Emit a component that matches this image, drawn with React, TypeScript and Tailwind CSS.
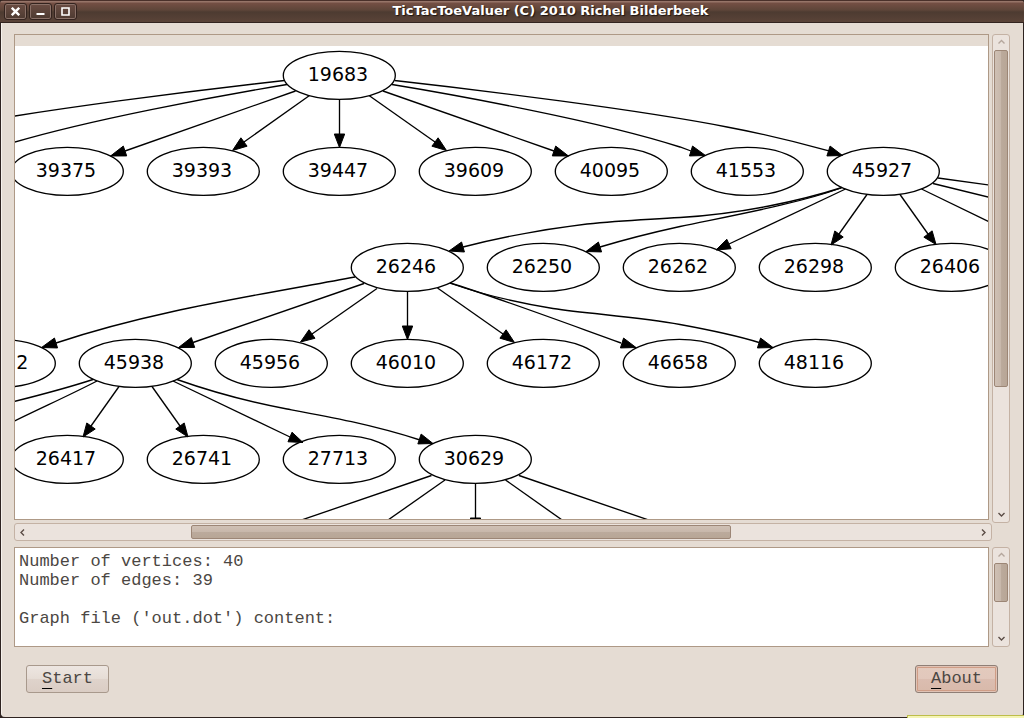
import React from 'react';
import { clsx } from 'clsx';

type Point = [number, number];
type Edge = { d: string; base?: Point; tip?: Point };

const nodes: { id: string; x: number; y: number }[] = [
  { id: '19683', x: 324, y: 29 },
  { id: '39375', x: 52, y: 125 },
  { id: '39393', x: 188, y: 125 },
  { id: '39447', x: 324, y: 125 },
  { id: '39609', x: 460, y: 125 },
  { id: '40095', x: 596, y: 125 },
  { id: '41553', x: 732, y: 125 },
  { id: '45927', x: 868, y: 125 },
  { id: '26246', x: 392, y: 221 },
  { id: '26250', x: 528, y: 221 },
  { id: '26262', x: 664, y: 221 },
  { id: '26298', x: 800, y: 221 },
  { id: '26406', x: 936, y: 221 },
  { id: '45932', x: -16, y: 317 },
  { id: '45938', x: 120, y: 317 },
  { id: '45956', x: 256, y: 317 },
  { id: '46010', x: 392, y: 317 },
  { id: '46172', x: 528, y: 317 },
  { id: '46658', x: 664, y: 317 },
  { id: '48116', x: 800, y: 317 },
  { id: '26417', x: 52, y: 413 },
  { id: '26741', x: 188, y: 413 },
  { id: '27713', x: 324, y: 413 },
  { id: '30629', x: 460, y: 413 },
];

const edges: Edge[] = [
  { d: 'M284.5 80.5C199 90 39 110-48 127' },
  { d: 'M287 84.5C229 94 79 121-1 147' },
  { d: 'M295.5 91L125 151', base: [125, 151], tip: [110.5, 156] },
  { d: 'M309.5 95.5L244 142', base: [244, 142], tip: [232.5, 150.5] },
  { d: 'M339.5 99.5V134', base: [339.5, 134], tip: [339.5, 147.5] },
  { d: 'M369 95.5L435 142', base: [435, 142], tip: [446.5, 150.5] },
  { d: 'M383 91L554 151', base: [554, 151], tip: [568.5, 156] },
  { d: 'M392 84.5C450 94 600 121 680 147L691 151', base: [691, 151], tip: [705.5, 155.5] },
  { d: 'M394.5 80.5C480 90 640 110 727 127C775 136 800 143 829 151', base: [828.5, 151], tip: [842.5, 155.5] },
  { d: 'M842 187.5C800 201 740 214 680 217.5C640 220 620 220.5 587 224C545 229 510 235 463 247', base: [463, 247], tip: [449, 251] },
  { d: 'M841 188C800 203 740 214 680 226.5C655 232 630 238 600 247', base: [600, 247], tip: [586, 251.5] },
  { d: 'M845.5 189L729 244', base: [729, 244], tip: [716, 250] },
  { d: 'M867 194.5L839 234', base: [839, 234], tip: [831, 245] },
  { d: 'M900 194.5L928 234', base: [928, 234], tip: [936, 244.5] },
  { d: 'M938 178L1004 187' },
  { d: 'M933 183.5L1004 201' },
  { d: 'M921.5 189L1004 229' },
  { d: 'M355 277C290 289 230 299 173 311.5C125 322 95 330 56 343', base: [56, 343], tip: [41.5, 347.5] },
  { d: 'M364 283.5L193 342.5', base: [193, 342.5], tip: [178.5, 347.5] },
  { d: 'M377 288.5L312 334', base: [312, 334], tip: [300.5, 342] },
  { d: 'M407.5 291.5V326', base: [407.5, 326], tip: [407.5, 339.5] },
  { d: 'M437.5 288L503 334', base: [503, 334], tip: [514.5, 342.5] },
  { d: 'M450 283C490 295 560 321 621 343', base: [622, 343], tip: [636, 347.5] },
  { d: 'M450 283C480 294 520 303 553 308.5C590 314 640 317 680 324.5C710 330 735 335 759 342.5', base: [759, 343], tip: [773, 347.5] },
  { d: 'M93 379.5C70 387 45 394 0 405' },
  { d: 'M97 381C70 395 45 406 0 428' },
  { d: 'M119 386.5L91 426', base: [91, 426], tip: [83, 437] },
  { d: 'M152 386.5L180 426', base: [180, 426], tip: [188, 437] },
  { d: 'M173 381L290 437', base: [290, 437], tip: [303, 442.5] },
  { d: 'M177 379.5C215 393 250 402 287 409C325 416 370 424 420 440', base: [419.5, 439], tip: [433, 443.5] },
  { d: 'M431.5 475.5L246 539' },
  { d: 'M445 480L361 539' },
  { d: 'M475.5 483.5V518', base: [475.5, 518], tip: [475.5, 531] },
  { d: 'M505.5 480L589 539' },
  { d: 'M519 475.5L704 539' },
];

function arrow([bx, by]: Point, [tx, ty]: Point) {
  const len = Math.hypot(tx - bx, ty - by);
  const nx = (-(ty - by) / len) * 5.2;
  const ny = ((tx - bx) / len) * 5.2;
  return `${tx},${ty} ${bx + nx},${by + ny} ${bx - nx},${by - ny}`;
}

function Graph() {
  return (
    <svg className="block min-h-0 w-full flex-1 basis-0 bg-white" role="img" aria-label="Graph">
      <g transform="translate(-15 -46)" stroke="black" strokeWidth="1.33">
        {edges.map((e) => (
          <g key={e.d}>
            <path d={e.d} fill="none" />
            {e.base && e.tip && <polygon points={arrow(e.base, e.tip)} fill="black" strokeWidth="1" />}
          </g>
        ))}
      </g>
      {nodes.map((n) => (
        <g key={n.id}>
          <ellipse cx={n.x + 0.3} cy={n.y + 0.4} rx="56" ry="24" fill="none" stroke="black" strokeWidth="1.33" />
          <text x={n.x - 1} y={n.y + 6} textAnchor="middle" className="font-['DejaVu_Sans',sans-serif] text-[19px]">
            {n.id}
          </text>
        </g>
      ))}
    </svg>
  );
}

const chevrons = {
  up: 'M1.5 5.5L4.5 2.5L7.5 5.5',
  down: 'M1.5 3L4.5 6L7.5 3',
  left: 'M6 1.5L3 4.5L6 7.5',
  right: 'M3 1.5L6 4.5L3 7.5',
};

function ArrowButton({ dir, muted }: { dir: keyof typeof chevrons; muted?: boolean }) {
  return (
    <button
      type="button"
      aria-label={`Scroll ${dir}`}
      className={clsx('flex size-[15px] shrink-0 items-center justify-center', muted ? 'text-[#b5a79d]' : 'text-[#5a4c46]')}
    >
      <svg className="size-[9px]" viewBox="0 0 9 9" fill="none" stroke="currentColor" strokeWidth="1.4">
        <path d={chevrons[dir]} />
      </svg>
    </button>
  );
}

function VerticalBar({ thumb, rest }: { thumb: number; rest: number }) {
  return (
    <div className="flex w-[18px] shrink-0 flex-col items-center rounded-[3px] border border-[#c4b2a4] bg-[#ebe3dd]">
      <ArrowButton dir="up" muted />
      <div className="flex w-full flex-1 flex-col items-center">
        <div
          className="w-[14px] basis-0 rounded-[2px] border border-[#9c8676] bg-[linear-gradient(90deg,#cfc0b4_0%,#c8b8ab_48%,#bbaa9c_52%,#b8a696_100%)]"
          style={{ flexGrow: thumb }}
        />
        <div className="basis-0" style={{ flexGrow: rest }} />
      </div>
      <ArrowButton dir="down" />
    </div>
  );
}

function HorizontalBar() {
  return (
    <div className="mr-[18px] flex h-[18px] items-center rounded-[3px] border border-[#c4b2a4] bg-[#ebe3dd]">
      <ArrowButton dir="left" />
      <div className="flex h-full flex-1 items-center">
        <div className="grow-[161] basis-0" />
        <div className="h-[14px] grow-[538] basis-0 rounded-[2px] border border-[#9c8676] bg-[linear-gradient(180deg,#cfc0b4_0%,#c8b8ab_48%,#bbaa9c_52%,#b8a696_100%)]" />
        <div className="grow-[245] basis-0" />
      </div>
      <ArrowButton dir="right" />
    </div>
  );
}

function TitleButton({ label, children }: { label: string; children: React.ReactNode }) {
  return (
    <button
      type="button"
      aria-label={label}
      className="flex h-[17px] w-[23px] items-center justify-center rounded-[3px] border border-[#33231e] bg-linear-to-b from-[#6b4d43] to-[#4d3a31] shadow-[inset_0_0_0_1px_#8a7168]"
    >
      <svg className="size-[9px] shrink-0" viewBox="0 0 9 9" fill="none" stroke="white">
        {children}
      </svg>
    </button>
  );
}

function TitleBar() {
  return (
    <header className="flex h-[23px] shrink-0 items-center rounded-t-[4px] border-b border-[#33241f] bg-[linear-gradient(180deg,#4a302a_0px,#4a302a_1px,#967468_1px,#967468_2px,#744f44_3px,#5e4539_10px,#4d3b31_12px,#5a4338_22px)] pl-1">
      <div className="flex gap-[2px]">
        <TitleButton label="Close">
          <path d="M.8 .8L8.2 8.2M8.2 .8L.8 8.2" strokeWidth="2.4" />
        </TitleButton>
        <TitleButton label="Minimize">
          <path d="M.5 7H8.5" strokeWidth="2" />
        </TitleButton>
        <TitleButton label="Maximize">
          <path d="M1 1H8V8H1Z" strokeWidth="1.6" />
        </TitleButton>
      </div>
      <h1 className="flex-1 pb-px text-center font-['DejaVu_Sans',sans-serif] text-[13px] leading-4 font-bold text-white [text-shadow:1px_1px_1px_#1d120e]">
        TicTacToeValuer (C) 2010 Richel Bilderbeek
      </h1>
    </header>
  );
}

const buttonClass =
  "flex h-7 w-[83px] items-center justify-center rounded-[3px] border font-['Liberation_Mono',monospace] text-[17px] leading-5 text-[#4c4743]";

export default function App() {
  return (
    <div className="relative flex min-h-screen flex-col overflow-hidden bg-[#2e2320]">
      <TitleBar />
      <main className="mx-px mb-px flex flex-1 flex-col rounded-b-[4px] border-l border-[#f6f1ec] bg-[#e5dcd3] pt-[11px] pr-[13px] pb-6 pl-3">
        <div className="flex min-h-64 flex-1 gap-[3px]">
          <section className="mb-[3px] flex min-w-0 flex-1 flex-col border border-[#ae9986] pt-[11px]">
            <Graph />
          </section>
          <VerticalBar thumb={336} rest={121} />
        </div>
        <HorizontalBar />
        <div className="mt-[6px] flex h-[100px] gap-[3px]">
          <textarea
            readOnly
            aria-label="Log"
            className="min-w-0 flex-1 resize-none overflow-hidden border border-[#ae9986] bg-white px-1 pt-1 font-['Liberation_Mono',monospace] text-[17px] leading-[19px] text-[#4c4743] outline-none"
            value={"Number of vertices: 40\nNumber of edges: 39\n\nGraph file ('out.dot') content:"}
          />
          <VerticalBar thumb={38} rest={30} />
        </div>
        <div className="mt-[18px] flex justify-between px-3">
          <button
            type="button"
            className={clsx(buttonClass, 'border-[#a8998c] bg-[linear-gradient(180deg,#ede6e1_0%,#e6ddd6_48%,#dfd3cb_52%,#dacdc4_100%)]')}
          >
            <span className="underline decoration-black decoration-1 underline-offset-[5px]">S</span>tart
          </button>
          <button
            type="button"
            className={clsx(buttonClass, 'border-[#8f7f76] bg-[linear-gradient(180deg,#e3cabd_0%,#e2c8bc_48%,#dbbdb0_52%,#d8b9aa_100%)] shadow-[inset_0_0_0_1px_#e0c3b5,inset_0_0_0_2px_#cf9d86]')}
          >
            <span className="underline decoration-black decoration-1 underline-offset-[5px]">A</span>bout
          </button>
        </div>
      </main>
      <div className="absolute right-0 bottom-0 h-[3px] w-[117px] border-t border-l border-[#bdbd4a] bg-[#f5f5b5]" />
    </div>
  );
}
